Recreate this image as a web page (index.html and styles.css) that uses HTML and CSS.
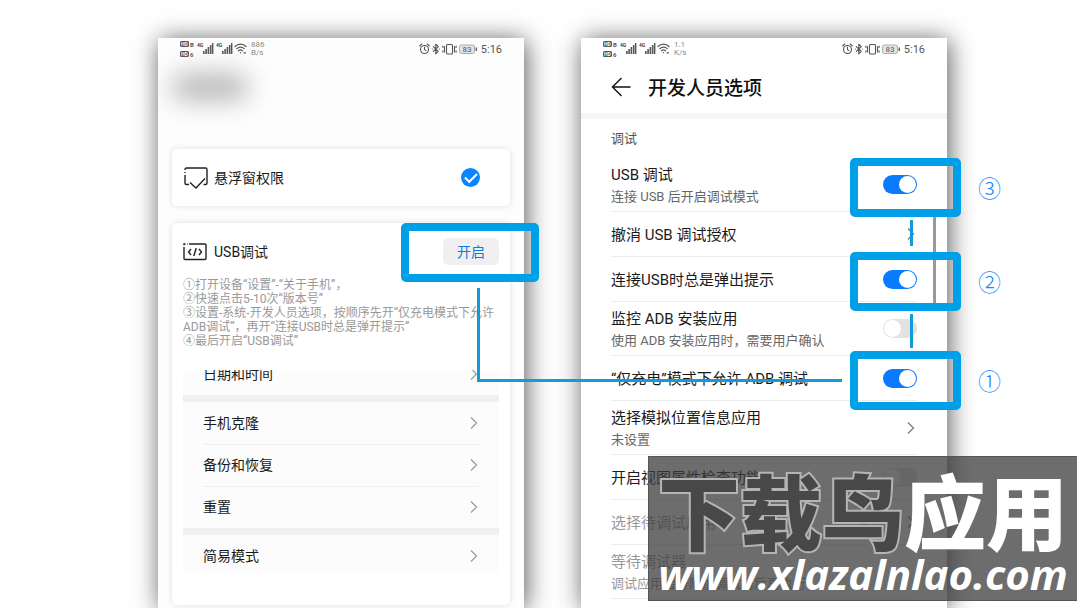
FILE: index.html
```html
<!DOCTYPE html>
<html lang="zh-CN">
<head>
<meta charset="utf-8">
<title>开发人员选项</title>
<link rel="stylesheet" href="styles.css">
</head>
<body>

<svg class="defs" aria-hidden="true">
  <symbol id="signals" viewBox="0 0 68 20">
    <g fill="#555">
      <rect x="0" y="2" width="9" height="6" rx="1.5"/>
      <rect x="0" y="12" width="9" height="6" rx="1.5"/>
      <rect x="23" y="12" width="1.6" height="3"/><rect x="25.3" y="10" width="1.6" height="5"/><rect x="27.6" y="8" width="1.6" height="7"/><rect x="29.9" y="6" width="1.6" height="9"/><rect x="32" y="4" width="1.4" height="11"/>
      <rect x="42" y="12" width="1.6" height="3"/><rect x="44.3" y="10" width="1.6" height="5"/><rect x="46.6" y="8" width="1.6" height="7"/><rect x="48.9" y="6" width="1.6" height="9"/><rect x="51" y="4" width="1.4" height="11"/>
    </g>
    <g font-family="Roboto, sans-serif" font-weight="700">
      <text x="1" y="7" font-size="5" fill="#fff">HD</text>
      <text x="1" y="17" font-size="5" fill="#fff">HD</text>
      <text x="10" y="8" font-size="6" fill="#555">B</text>
      <text x="10" y="18" font-size="6" fill="#555">6</text>
      <text x="17" y="8" font-size="5" fill="#444">4G</text>
      <text x="36" y="8" font-size="5" fill="#444">4G</text>
    </g>
    <g fill="none" stroke="#555" stroke-width="1.2" stroke-linecap="round">
      <path d="M55 7.5c3.4-3.3 8-3.3 11 0M56.8 9.7c2.3-2.2 5.3-2.2 7.4 0M58.6 11.8c1.2-1.1 2.6-1.1 3.8 0"/>
      <path d="M60.5 13.6v.2M64 13.8h1.6"/>
    </g>
  </symbol>
  <symbol id="devices" viewBox="0 0 60 14">
    <g fill="none" stroke="#555" stroke-width="1.1" stroke-linecap="round" stroke-linejoin="round">
      <circle cx="6.500" cy="7.500" r="4"/>
      <path d="M6.500 5v2.600l1.500 1M1.700 4l2-2M11.300 4l-2-2"/>
      <path d="M15.300 4.600L20.300 9.400L17.800 11.800V2.200L20.300 4.600L15.300 9.400M14.300 7h.1M21.300 7h.1"/>
      <rect x="28.500" y="2.500" width="6" height="9.500" rx="1"/>
      <path d="M26.500 4.500v5.500M36.500 4.500v5.500M24.900 4v1.500M24.900 8.800v1.500M38.100 4v1.500M38.100 8.800v1.500"/>
    </g>
    <rect x="41.5" y="3" width="15" height="8.5" rx="2" fill="#e4e4e4" stroke="#aaa"/>
    <path d="M58.3 5.5v3.5" stroke="#666" stroke-width="1.5"/>
    <text x="44.5" y="10" font-size="8" fill="#555" font-family="Roboto, sans-serif">83</text>
  </symbol>
  <symbol id="chevron" viewBox="0 0 8 14">
    <path d="M1 1.5L6.5 7L1 12.5" fill="none" stroke="currentColor" stroke-width="1.2"/>
  </symbol>
</svg>

<main class="stage">

  <section class="phone phone-guide">
    <div class="status">
      <svg class="signals"><use href="#signals"/></svg>
      <span class="speed">886<br>B/s</span>
      <svg class="devices"><use href="#devices"/></svg>
      <span class="time">5:16</span>
    </div>
    <div class="hidden-name"></div>

    <div class="card permission">
      <svg class="card-icon" viewBox="0 0 24 22" fill="none" stroke="#222" stroke-width="1.4">
        <path d="M1 3V2.500Q1 1 2.500 1H21.500Q23 1 23 2.500V16Q23 17.500 21.500 17.500H19.500M1 5V6M1 8V16Q1 17.500 2.500 17.500H5"/>
        <path d="M6 15.500L12 21L21 11.500"/>
      </svg>
      <label for="float-window">悬浮窗权限</label>
      <input type="checkbox" class="tick" id="float-window" checked>
    </div>

    <div class="card usb">
      <div class="usb-head">
        <svg class="card-icon" viewBox="0 0 24 18" fill="none" stroke="#222" stroke-width="1.4">
          <path d="M1 4V15.500Q1 16.500 2 16.500H22Q23 16.500 23 15.500V2Q23 1 22 1H6M1 2.200V1H2.500M4 1H4.600"/>
          <path d="M8 6L5.500 9L8 12M16 6L18.500 9L16 12M13.200 5L10.800 13"/>
        </svg>
        <h2>USB调试</h2>
        <button class="open">开启</button>
        <span class="frame frame-open"></span>
      </div>
      <p class="steps">①打开设备“设置”-“关于手机”，<br>②快速点击5-10次“版本号”<br>③设置-系统-开发人员选项，按顺序先开“仅充电模式下允许<br>ADB调试”，再开“连接USB时总是弹开提示”<br>④最后开启“USB调试”</p>
      <nav class="system">
        <a href="#" class="cut"><span>日期和时间</span><svg class="chevron"><use href="#chevron"/></svg></a>
        <hr>
        <a href="#"><span>手机克隆</span><svg class="chevron"><use href="#chevron"/></svg></a>
        <a href="#" class="ruled"><span>备份和恢复</span><svg class="chevron"><use href="#chevron"/></svg></a>
        <a href="#" class="ruled"><span>重置</span><svg class="chevron"><use href="#chevron"/></svg></a>
        <hr>
        <a href="#"><span>简易模式</span><svg class="chevron"><use href="#chevron"/></svg></a>
      </nav>
    </div>
    <span class="link-line"></span>
  </section>

  <section class="phone phone-options">
    <div class="status">
      <svg class="signals"><use href="#signals"/></svg>
      <span class="speed">1.1<br>K/s</span>
      <svg class="devices"><use href="#devices"/></svg>
      <span class="time">5:16</span>
    </div>
    <header class="title-bar">
      <button class="back" aria-label="返回">
        <svg viewBox="0 0 20 20" fill="none" stroke="#111" stroke-width="1.4"><path d="M19.500 10H1.500M10.500 1L1.500 10L10.500 19"/></svg>
      </button>
      <h1>开发人员选项</h1>
    </header>
    <h3>调试</h3>
    <div class="options">
      <div class="row tall">
        <label for="usb-debug">USB 调试<small>连接 USB 后开启调试模式</small></label>
        <input type="checkbox" class="toggle" id="usb-debug" checked>
        <span class="frame"></span><span class="number">③</span>
      </div>
      <a href="#" class="row">
        <span>撤消 USB 调试授权</span>
        <svg class="chevron"><use href="#chevron"/></svg>
        <span class="step-line"></span>
      </a>
      <div class="row">
        <label for="usb-prompt">连接USB时总是弹出提示</label>
        <input type="checkbox" class="toggle" id="usb-prompt" checked>
        <span class="frame"></span><span class="number">②</span>
      </div>
      <div class="row tall">
        <label for="adb-watch">监控 ADB 安装应用<small>使用 ADB 安装应用时，需要用户确认</small></label>
        <input type="checkbox" class="toggle" id="adb-watch">
        <span class="step-line long"></span>
      </div>
      <div class="row">
        <label for="charge-adb">“仅充电”模式下允许 ADB 调试</label>
        <input type="checkbox" class="toggle" id="charge-adb" checked>
        <span class="frame"></span><span class="number">①</span>
      </div>
      <a href="#" class="row tall">
        <span>选择模拟位置信息应用<small>未设置</small></span>
        <svg class="chevron"><use href="#chevron"/></svg>
      </a>
      <div class="row">
        <label for="view-attr">开启视图属性检查功能</label>
        <input type="checkbox" class="toggle" id="view-attr">
      </div>
      <a href="#" class="row off">
        <span>选择待调试应用</span>
        <span class="value">未设置</span>
        <svg class="chevron"><use href="#chevron"/></svg>
      </a>
      <div class="row tall off">
        <span>等待调试器<small>调试应用会等附加调试器后再执行</small></span>
      </div>
    </div>
    <span class="scroll-thumb"></span>
  </section>

  <aside class="watermark">
    <div class="brand"><span class="brand-dark">下载鸟</span>应用</div>
    <div class="site">www.xlazalnlao.com</div>
  </aside>

</main>

</body>
</html>
```
FILE: styles.css
```css
* { box-sizing: border-box; }
body { margin: 0; background: #fff; color: #1a1a1a; font-family: Roboto, "Noto Sans CJK SC", sans-serif; }
h1, h2, h3, p { margin: 0; font-weight: 400; }
a { color: inherit; text-decoration: none; }
button { border: 0; padding: 0; font-family: inherit; cursor: pointer; }
.defs { position: absolute; width: 0; height: 0; }

.stage { position: relative; display: grid; grid-template-columns: 1fr 1fr; gap: 57px; height: 100vh; padding: 38px 133px 0 158px; overflow: hidden; }
.phone { position: relative; background: #fff; box-shadow: 2px 2px 24px rgba(0, 0, 0, 0.65); }
.phone-guide { z-index: 1; padding: 0 14px; background: #fdfdfd; }

/* status bar */
.status { display: flex; align-items: center; height: 22px; color: #555; }
.phone-guide .status { padding: 0 8px; }
.phone-options .status { padding: 0 22px; }
.signals { width: 68px; height: 20px; overflow: visible; }
.speed { margin-left: 3px; color: #888; font-size: 8px; line-height: 8px; }
.devices { width: 60px; height: 14px; margin-left: auto; }
.time { margin-left: 3px; font-size: 11px; }

/* left phone */
.hidden-name { width: 76px; height: 26px; margin: 14px 0 49px; background: #b4b4b4; border-radius: 13px; filter: blur(13px); }
.card { background: #fff; border-radius: 5px; box-shadow: 0 0 6px rgba(0, 0, 0, 0.12); }
.card-icon { width: 24px; height: 22px; }
.permission { display: flex; align-items: center; gap: 6px; height: 57px; padding: 0 30px 0 12px; font-size: 14px; line-height: 18px; }
.tick { appearance: none; display: grid; place-items: center; width: 19px; height: 19px; margin: 0 0 0 auto; border-radius: 50%; background: #0a84ff; }
.tick::before { content: ""; width: 10px; height: 5px; margin-bottom: 3px; border: solid #fff; border-width: 0 0 2px 2px; transform: rotate(-45deg); }
.usb { margin-top: 17px; padding: 15px 11px 31px; }
.usb-head { position: relative; display: flex; align-items: center; gap: 7px; height: 27px; }
.usb-head h2 { font-size: 14px; line-height: 18px; }
.open { width: 56px; height: 27px; margin-left: auto; border-radius: 5px; background: #f0f0f0; color: #0a7be0; font-size: 14px; line-height: 24px; }
.steps { margin-top: 13px; color: #999; font-size: 12px; line-height: 14px; white-space: nowrap; }
.system { height: 204px; margin-top: 22px; overflow: hidden; background: #fcfcfc; }
.system a { position: relative; display: flex; align-items: center; justify-content: space-between; height: 42px; padding: 0 21px 0 20px; font-size: 14px; line-height: 18px; }
.system .cut { margin-top: -17px; }
.system .ruled::before { content: ""; position: absolute; top: 0; left: 20px; right: 20px; border-top: 1px solid #f0f0f0; }
.system hr { height: 7px; margin: 0; border: 0; background: #f1eff2; }
.chevron { flex: none; width: 8px; height: 14px; color: #999; }

/* right phone */
.title-bar { display: flex; align-items: center; gap: 17px; height: 59px; padding: 0 30px; border-bottom: 6px solid #f5f5f5; }
.back { width: 20px; height: 20px; background: none; }
.back svg { display: block; }
.title-bar h1 { font-size: 19px; font-weight: 500; color: #111; }
.phone-options h3 { padding: 0 30px; color: #555; font-size: 13px; line-height: 39px; }
.options { padding: 0 30px; }
.row { position: relative; display: flex; align-items: center; justify-content: space-between; height: 45px; border-bottom: 1px solid #ececec; font-size: 15px; line-height: 21px; white-space: nowrap; }
.row.tall { height: 54px; }
.row label, .row > span:first-child { padding-top: 2px; }
.row small { display: block; color: #666; font-size: 13px; }
.row.off, .row.off small { color: #999; }
.row .chevron { margin-right: 2px; color: #777; }
.value { margin: 0 10px 0 auto; font-size: 13px; }
.toggle { appearance: none; display: flex; width: 34px; height: 19px; margin: 0; padding: 1px; border-radius: 10px; background: #e2e2e2; }
.toggle::before { content: ""; width: 17px; height: 17px; border-radius: 50%; background: #fff; }
.toggle:checked { justify-content: flex-end; background: #0a7aff; }
.scroll-thumb { position: absolute; top: 178px; right: 11px; width: 3px; height: 95px; border-radius: 2px; background: #999; }

/* marks over the screens */
.frame { position: absolute; z-index: 2; top: 50%; right: -44px; width: 111px; height: 59px; margin-top: -27px; border: 8px solid #00a0e9; border-radius: 5px; }
.frame-open { top: 0; right: -40px; width: 138px; margin-top: -15px; }
.number { position: absolute; top: 50%; right: -84px; margin-top: -13px; color: #1a86ff; font-family: "Noto Sans CJK SC", sans-serif; font-size: 23px; font-weight: 300; line-height: 30px; }
.step-line { position: absolute; z-index: 2; top: 8px; right: 4px; width: 3px; height: 26px; background: #119bdb; }
.step-line.long { top: 12px; height: 34px; }
.link-line { position: absolute; top: 250px; left: calc(100% - 47px); width: 365px; height: 94px; border: solid #119bdb; border-width: 0 0 3px 3px; }

/* watermark */
.watermark { position: absolute; z-index: 3; right: 3px; bottom: 7px; width: 429px; height: 145px; padding: 10px 6px; border: 1px solid #555; border-right: 0; background: rgba(60, 60, 60, 0.75); color: #fff; font-weight: 900; text-align: center; white-space: nowrap; }
.brand { font-family: "Noto Sans CJK SC", sans-serif; font-size: 82px; line-height: 84px; }
.brand-dark { color: #484848; -webkit-text-stroke: 4px #b4b4b4; paint-order: stroke fill; }
.site { font-family: "Open Sans", sans-serif; font-size: 42px; font-style: italic; font-weight: 700; line-height: 46px; }
```
